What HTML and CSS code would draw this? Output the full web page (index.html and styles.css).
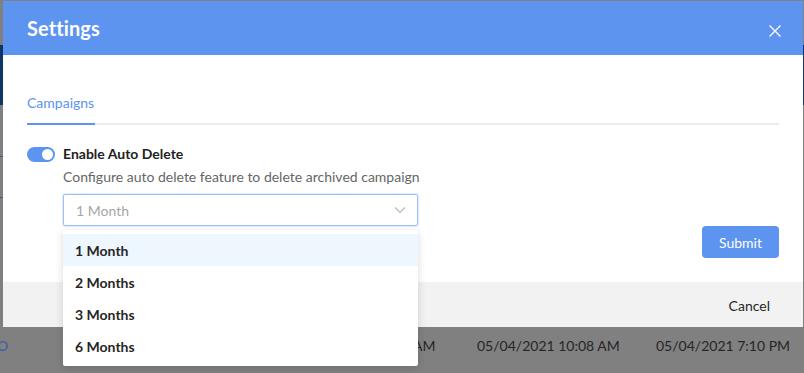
FILE: index.html
```html
<!DOCTYPE html>
<html>
<head>
<meta charset="utf-8">
<link rel="stylesheet" href="styles.css">
</head>
<body>
<div class="page">
  <div class="page-top"></div>
  <div class="page-lines">
    <div class="pline"></div>
    <div class="pline second"></div>
  </div>
  <div class="page-row">
    <span class="cell c0">O</span>
    <span class="cell c1">AM</span>
    <span class="cell c2">05/04/2021 10:08 AM</span>
    <span class="cell c3">05/04/2021 7:10 PM</span>
  </div>
</div>

<div class="modal">
  <div class="modal-header">
    <h1 class="modal-title">Settings</h1>
    <span class="close">
      <svg width="12" height="12" viewBox="0 0 12 12"><path d="M0.5 0.5 L11.5 11.5 M11.5 0.5 L0.5 11.5" stroke="#fff" stroke-width="1.3" fill="none"/></svg>
    </span>
  </div>
  <div class="modal-body">
    <div class="tabs">
      <div class="tab active">Campaigns</div>
    </div>
    <div class="setting">
      <div class="toggle"><span class="knob"></span></div>
      <div class="setting-text">
        <div class="setting-label">Enable Auto Delete</div>
        <div class="setting-desc">Configure auto delete feature to delete archived campaign</div>
        <div class="select-wrap">
          <div class="select">
            <span class="placeholder">1 Month</span>
            <svg class="chevron" width="12" height="8" viewBox="0 0 12 8"><path d="M1 1.5 L6 6.5 L11 1.5" stroke="#b8b8b8" stroke-width="1.1" fill="none"/></svg>
          </div>
          <ul class="menu">
            <li class="item hover">1 Month</li>
            <li class="item">2 Months</li>
            <li class="item">3 Months</li>
            <li class="item">6 Months</li>
          </ul>
        </div>
      </div>
    </div>
    <div class="actions">
      <button class="btn-submit">Submit</button>
    </div>
  </div>
  <div class="modal-footer">
    <span class="cancel">Cancel</span>
  </div>
</div>
</body>
</html>
```

FILE: styles.css
```css
* { box-sizing: border-box; }
html, body { margin: 0; padding: 0; }
body {
  width: 804px;
  height: 373px;
  overflow: hidden;
  background: #808080;
  font-family: Lato, "Open Sans", sans-serif;
  position: relative;
}

.page { padding-top: 45px; }
.page-top { height: 60px; background: #0e3566; }
.page-lines { padding-top: 51px; }
.pline { height: 1px; width: 3px; background: #3a5a9a; }
.pline.second { margin-top: 40px; }
.page-row {
  display: flex;
  align-items: center;
  margin-top: 137px;
  height: 20px;
  font-size: 14px;
  color: #262626;
}
.cell { white-space: nowrap; }
.c0 { color: #3a5ea8; margin-left: -3px; width: 416px; }
.c1 { width: 64px; }
.c2 { width: 179px; }
.c3 { }

.modal {
  position: absolute;
  left: 3px;
  top: 1px;
  width: 800px;
  height: 326px;
  background: #fff;
  display: flex;
  flex-direction: column;
}
.modal-header {
  height: 54px;
  background: #5c94f0;
  display: flex;
  align-items: center;
  justify-content: space-between;
  padding: 0 22px 0 24px;
}
.modal-title {
  margin: 0;
  font-size: 20px;
  font-weight: 700;
  color: #fff;
  letter-spacing: 0.1px;
}
.close { display: flex; margin-top: 6px; }

.modal-body {
  flex: 1;
  padding: 39px 24px 0 24px;
  position: relative;
}
.tabs {
  border-bottom: 2px solid #ededed;
  display: flex;
}
.tab {
  font-size: 14px;
  color: #5c94f0;
  padding-bottom: 12px;
  margin-bottom: -2px;
  border-bottom: 2px solid #5c94f0;
  width: 68px;
}

.setting {
  display: flex;
  align-items: flex-start;
  margin-top: 20px;
}
.toggle {
  width: 28px;
  height: 15px;
  border-radius: 8px;
  background: #5c94f0;
  position: relative;
  margin-top: 2px;
  margin-right: 8px;
}
.knob {
  position: absolute;
  right: 2px;
  top: 2px;
  width: 11px;
  height: 11px;
  border-radius: 50%;
  background: #fff;
}
.setting-label {
  font-size: 14px;
  font-weight: 700;
  color: #222;
  line-height: 18px;
}
.setting-desc {
  font-size: 14px;
  color: #666;
  line-height: 18px;
  margin-top: 5px;
}
.select-wrap {
  position: relative;
  margin-top: 8px;
  width: 355px;
}
.select {
  height: 32px;
  border: 1px solid #9fc0f6;
  border-radius: 2px;
  box-shadow: 0 0 0 1px #e3edfd;
  display: flex;
  align-items: center;
  justify-content: space-between;
  padding: 0 11px 0 12px;
}
.placeholder { font-size: 14px; color: #a6a6a6; }
.menu {
  position: absolute;
  top: 36px;
  left: 0;
  width: 355px;
  margin: 0;
  padding: 4px 0;
  list-style: none;
  background: #fff;
  border-radius: 2px;
  box-shadow: 0 2px 8px rgba(0,0,0,0.15);
  z-index: 5;
}
.item {
  height: 32px;
  display: flex;
  align-items: center;
  padding: 0 12px;
  font-size: 14px;
  font-weight: 700;
  color: #262626;
}
.item.hover { background: #eef6fe; }

.actions {
  position: absolute;
  right: 24px;
  top: 171px;
}
.btn-submit {
  width: 77px;
  height: 32px;
  border: none;
  border-radius: 4px;
  background: #5c94f0;
  color: #fff;
  font-family: Lato, sans-serif;
  font-size: 14px;
}

.modal-footer {
  height: 45px;
  background: #f2f2f2;
  display: flex;
  align-items: center;
  justify-content: flex-end;
  padding-right: 33px;
}
.cancel { font-size: 14px; color: #262626; padding-top: 2px; }
```
